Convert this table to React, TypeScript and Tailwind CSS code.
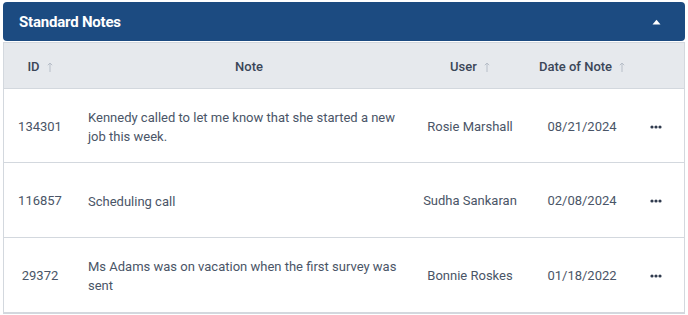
import React from "react";

type Note = {
  id: number;
  text: string;
  user: string;
  date: string;
};

const notes: Note[] = [
  {
    id: 134301,
    text: "Kennedy called to let me know that she started a new job this week.",
    user: "Rosie Marshall",
    date: "08/21/2024",
  },
  { id: 116857, text: "Scheduling call", user: "Sudha Sankaran", date: "02/08/2024" },
  {
    id: 29372,
    text: "Ms Adams was on vacation when the first survey was sent",
    user: "Bonnie Roskes",
    date: "01/18/2022",
  },
];

const cols = "grid grid-cols-[72px_346px_96px_128px_20px_1fr]";
const rowHeights = ["h-[74px]", "h-[75px]", "h-[74px]"];

const SortArrow = () => (
  <svg width="6" height="10" viewBox="0 0 6 10" className="ml-[7px] text-[#b7bec8]">
    <path d="M3 1v9M0.8 3.2L3 1l2.2 2.2" stroke="currentColor" strokeWidth="1" fill="none" />
  </svg>
);

const Dots = () => (
  <svg width="12" height="4" viewBox="0 0 12 4" className="text-[#2f3a4d]">
    <circle cx="2" cy="2" r="1.6" fill="currentColor" />
    <circle cx="6" cy="2" r="1.6" fill="currentColor" />
    <circle cx="10" cy="2" r="1.6" fill="currentColor" />
  </svg>
);

const HeaderCell = ({ label, sortable }: { label: string; sortable?: boolean }) => (
  <div className="flex items-center justify-center">
    {label}
    {sortable && <SortArrow />}
  </div>
);

export default function App() {
  return (
    <div
      className="w-[688px] h-[315px] bg-white pt-[2px] px-[3px]"
      style={{ fontFamily: "Roboto, 'Liberation Sans', sans-serif" }}
    >
      <div className="h-[39px] rounded-[4px] bg-[#1c4b81] flex items-center justify-between pl-4 pr-[24px] pt-px">
        <span className="text-white font-bold text-[15px] tracking-[-0.2px]">Standard Notes</span>
        <svg width="9" height="6" viewBox="0 0 9 6">
          <path d="M0.5 5.5L4.5 0.8L8.5 5.5Z" fill="white" />
        </svg>
      </div>

      <div className="mt-[1px] border border-[#d3d8de] border-b-2">
        <div
          className={`${cols} h-[46px] pt-[3px] items-center bg-[#e6e9ed] border-b border-[#d3d8de] text-[13px] font-medium text-[#3b4658]`}
        >
          <HeaderCell label="ID" sortable />
          <HeaderCell label="Note" />
          <HeaderCell label="User" sortable />
          <HeaderCell label="Date of Note" sortable />
          <div />
          <div />
        </div>

        {notes.map((n, i) => (
          <div
            key={n.id}
            className={`${cols} ${rowHeights[i]} items-center pt-[2px] text-[13px] text-[#4a5567] ${
              i < notes.length - 1 ? "border-b border-[#d3d8de]" : ""
            }`}
          >
            <div className="text-center">{n.id}</div>
            <div className="pl-3 pr-[24px] leading-[19px]">{n.text}</div>
            <div className="text-center">{n.user}</div>
            <div className="text-center">{n.date}</div>
            <div className="flex justify-center">
              <Dots />
            </div>
            <div />
          </div>
        ))}
      </div>
    </div>
  );
}
